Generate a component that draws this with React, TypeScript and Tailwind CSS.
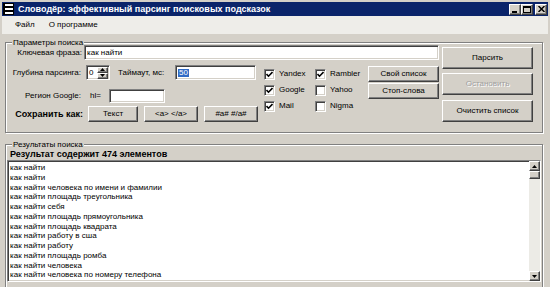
import React from "react";

const raised =
  "border border-t-white border-l-white border-r-[#404040] border-b-[#404040] shadow-[inset_-1px_-1px_0_#808080]";
const sunken =
  "border border-t-[#808080] border-l-[#808080] border-r-white border-b-white shadow-[inset_1px_1px_0_#404040,inset_-1px_-1px_0_#d4d0c8]";

const results = [
  "как найти",
  "как найти",
  "как найти человека по имени и фамилии",
  "как найти площадь треугольника",
  "как найти себя",
  "как найти площадь прямоугольника",
  "как найти площадь квадрата",
  "как найти работу в сша",
  "как найти работу",
  "как найти площадь ромба",
  "как найти человека",
  "как найти человека по номеру телефона",
  "как найти",
];

function Button({
  children,
  className = "",
  disabled,
}: {
  children?: React.ReactNode;
  className?: string;
  disabled?: boolean;
}) {
  return (
    <div
      className={`${raised} flex items-center justify-center bg-[#d4d0c8] ${
        disabled ? "text-[#a0a0a0] [text-shadow:1px_1px_0_white]" : ""
      } ${className}`}
    >
      {children}
    </div>
  );
}

function Field({ children, className = "" }: { children?: React.ReactNode; className?: string }) {
  return <div className={`${sunken} bg-white flex items-center pl-[2px] ${className}`}>{children}</div>;
}

function Check({ label, checked }: { label: string; checked?: boolean }) {
  return (
    <div className="flex items-center h-[16px]">
      <div className={`${sunken} bg-white w-[11px] h-[11px] ml-[2px] flex items-center justify-center`}>
        {checked && (
          <svg width="7" height="7" viewBox="0 0 7 7">
            <path d="M0.5 3 L2.5 5.2 L6.5 1" fill="none" stroke="black" strokeWidth="1.6" />
          </svg>
        )}
      </div>
      <span className="ml-[4px]">{label}</span>
    </div>
  );
}

function GroupBox({
  title,
  className = "",
  children,
}: {
  title: string;
  className?: string;
  children: React.ReactNode;
}) {
  return (
    <fieldset
      className={`border border-[#808080] shadow-[inset_1px_1px_0_white,1px_1px_0_white] ${className}`}
    >
      <legend className="ml-[6px] px-[1px] leading-[9px] bg-[#d4d0c8]">{title}</legend>
      {children}
    </fieldset>
  );
}

function TitleBar() {
  return (
    <div className="h-[14px] bg-[#0a246a] flex items-center pl-[1px] pr-[1px]">
      <svg width="11" height="12" viewBox="0 0 11 12">
        <rect x="0" y="0" width="11" height="12" fill="black" />
        <rect x="2" y="1" width="8" height="2" fill="white" />
        <rect x="2" y="5" width="8" height="2" fill="white" />
        <rect x="2" y="9" width="8" height="2" fill="white" />
      </svg>
      <span className="ml-[4px] text-white font-bold text-[9px]">
        Словодёр: эффективный парсинг поисковых подсказок
      </span>
      <div className="ml-auto flex">
        <Button className="w-[12px] h-[11px]">
          <div className="w-[5px] h-[2px] bg-black mt-[5px] -ml-[2px]" />
        </Button>
        <Button className="w-[12px] h-[11px]">
          <div className="w-[8px] h-[7px] border border-black border-t-2" />
        </Button>
        <Button className="w-[12px] h-[11px] ml-[2px]">
          <svg width="7" height="6" viewBox="0 0 7 6">
            <path d="M0.5 0 L6.5 6 M6.5 0 L0.5 6" stroke="black" strokeWidth="1.5" />
          </svg>
        </Button>
      </div>
    </div>
  );
}

function MenuBar() {
  return (
    <div className="h-[18px] bg-[#eeede9] flex items-center pl-[13px] gap-[14px]">
      <span>Файл</span>
      <span>О программе</span>
    </div>
  );
}

function Params() {
  return (
    <GroupBox title="Параметры поиска" className="mt-[4px] h-[95px]">
      <div className="flex -mt-[2px]">
        <div className="w-[436px]">
          <div className="flex items-center h-[15px]">
            <span className="w-[78px] text-right pr-[2px]">Ключевая фраза:</span>
            <Field className="w-[355px] h-[15px]">как найти</Field>
          </div>
          <div className="flex items-start mt-[5px]">
            <div className="w-[256px]">
              <div className="flex items-center h-[15px]">
                <span className="w-[75px] text-right">Глубина парсинга:</span>
                <Field className="ml-[5px] w-[24px] h-[15px] pl-[2px] justify-between pr-[1px]">
                  <span>0</span>
                  <div className="flex flex-col w-[11px]">
                    <Button className="h-[6px]">
                      <svg width="5" height="3" viewBox="0 0 5 3"><path d="M0 3 L2.5 0 L5 3Z" fill="black" /></svg>
                    </Button>
                    <Button className="h-[6px]">
                      <svg width="5" height="3" viewBox="0 0 5 3"><path d="M0 0 L2.5 3 L5 0Z" fill="black" /></svg>
                    </Button>
                  </div>
                </Field>
                <span className="ml-[8px] w-[57px]">Таймаут, мс:</span>
                <Field className="w-[81px] h-[15px]">
                  <span className="bg-[#316ac5] text-white px-[1px]">50</span>
                </Field>
              </div>
              <div className="flex items-center h-[14px] mt-[9px]">
                <span className="w-[75px] text-right">Регион Google:</span>
                <span className="ml-[9px] w-[19px]">hl=</span>
                <Field className="w-[56px] h-[14px]" />
              </div>
              <div className="flex items-center mt-[3px]">
                <span className="w-[77px] text-right font-bold text-[9px]">Сохранить как:</span>
                <Button className="ml-[5px] w-[50px] h-[16px]">Текст</Button>
                <Button className="ml-[6px] w-[54px] h-[16px]">&lt;a&gt; &lt;/a&gt;</Button>
                <Button className="ml-[6px] w-[54px] h-[16px]">#a# #/a#</Button>
              </div>
            </div>
            <div className="grid grid-cols-[51px_55px] content-start mt-[1px]">
              <Check label="Yandex" checked />
              <Check label="Rambler" checked />
              <Check label="Google" checked />
              <Check label="Yahoo" />
              <Check label="Mail" checked />
              <Check label="Nigma" />
            </div>
            <div className="flex flex-col gap-[1px] mt-[1px]">
              <Button className="w-[71px] h-[16px]">Свой список</Button>
              <Button className="w-[71px] h-[16px]">Стоп-слова</Button>
            </div>
          </div>
        </div>
        <div className="flex flex-col mt-[2px] w-[91px]">
          <Button className="h-[22px]">Парсить</Button>
          <Button className="h-[22px] mt-[4px]" disabled>
            Остановить
          </Button>
          <Button className="h-[22px] mt-[5px]">Очистить список</Button>
        </div>
      </div>
    </GroupBox>
  );
}

function Results() {
  return (
    <GroupBox title="Результаты поиска" className="mt-[7px] h-[148px]">
      <div className="pl-[4px] font-bold text-[9px] leading-[12px] -mt-[1px]">
        Результат содержит 474 элементов
      </div>
      <div className={`${sunken} mx-[1px] h-[122px] bg-white flex overflow-hidden`}>
        <div className="flex-1 pl-[2px] pt-[2px] overflow-hidden">
          {results.map((r, i) => (
            <div key={i} className="h-[9.75px] leading-[9.75px] whitespace-nowrap">
              {r}
            </div>
          ))}
        </div>
        <div className="w-[11px] flex flex-col bg-[#ecebe6]">
          <Button className="h-[10px]">
            <svg width="5" height="3" viewBox="0 0 5 3"><path d="M0 3 L2.5 0 L5 3Z" fill="black" /></svg>
          </Button>
          <Button className="h-[8px]" />
          <div className="flex-1" />
          <Button className="h-[10px]">
            <svg width="5" height="3" viewBox="0 0 5 3"><path d="M0 0 L2.5 3 L5 0Z" fill="black" /></svg>
          </Button>
        </div>
      </div>
    </GroupBox>
  );
}

export default function App() {
  return (
    <div className="w-[550px] h-[287px] overflow-hidden bg-[#d4d0c8] pt-[2px] px-[2px] font-['Liberation_Sans',Arial,sans-serif] text-[8px] text-black leading-none">
      <TitleBar />
      <MenuBar />
      <div className="pl-[3px] pr-[5px]">
        <Params />
        <Results />
      </div>
    </div>
  );
}
